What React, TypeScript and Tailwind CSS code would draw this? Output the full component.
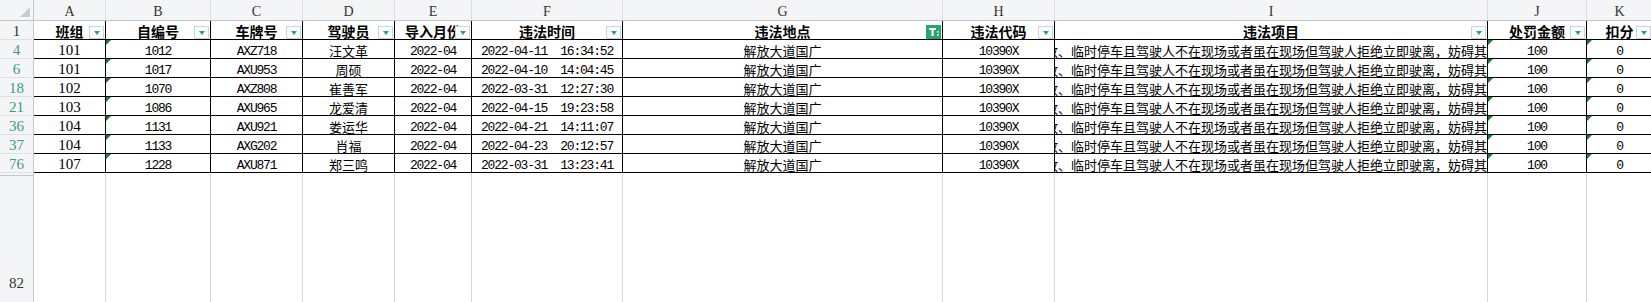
import React from 'react'

interface Col {
  letter: string
  w: string
  title: string
  cell: string
  mark?: boolean
  active?: boolean
}

const mono = "font-['Liberation_Mono',monospace] text-[13px] leading-[13px] tracking-[-1.2px] whitespace-pre"
const cjk = "font-['Noto_Sans_CJK_SC',sans-serif] text-[13px] leading-[15px] whitespace-nowrap"

const cols: Col[] = [
  { letter: 'A', w: 'w-[72px]', title: '班组', cell: "font-['Liberation_Serif',serif] text-[15px] leading-[15px]" },
  { letter: 'B', w: 'w-[105px]', title: '自编号', cell: mono, mark: true },
  { letter: 'C', w: 'w-[92px]', title: '车牌号', cell: mono },
  { letter: 'D', w: 'w-[92px]', title: '驾驶员', cell: cjk },
  { letter: 'E', w: 'w-[77px]', title: '导入月份', cell: mono },
  { letter: 'F', w: 'w-[151px]', title: '违法时间', cell: mono },
  { letter: 'G', w: 'w-[320px]', title: '违法地点', cell: cjk, active: true },
  { letter: 'H', w: 'w-[112px]', title: '违法代码', cell: mono },
  { letter: 'I', w: 'w-[433px]', title: '违法项目', cell: cjk },
  { letter: 'J', w: 'w-[99px]', title: '处罚金额', cell: mono, mark: true },
  { letter: 'K', w: 'w-[66px]', title: '扣分', cell: mono, mark: true },
]

const item = '放、临时停车且驾驶人不在现场或者虽在现场但驾驶人拒绝立即驶离，妨碍其'

const rows: { n: string; v: string[] }[] = [
  { n: '4', v: ['101', '1012', 'AXZ718', '汪文革', '2022-04', '2022-04-11  16:34:52'] },
  { n: '6', v: ['101', '1017', 'AXU953', '周硕', '2022-04', '2022-04-10  14:04:45'] },
  { n: '18', v: ['102', '1070', 'AXZ808', '崔善军', '2022-04', '2022-03-31  12:27:30'] },
  { n: '21', v: ['103', '1086', 'AXU965', '龙爱清', '2022-04', '2022-04-15  19:23:58'] },
  { n: '36', v: ['104', '1131', 'AXU921', '娄运华', '2022-04', '2022-04-21  14:11:07'] },
  { n: '37', v: ['104', '1133', 'AXG202', '肖福', '2022-04', '2022-04-23  20:12:57'] },
  { n: '76', v: ['107', '1228', 'AXU871', '郑三鸣', '2022-04', '2022-03-31  13:23:41'] },
]

const DropButton: React.FC<{ active?: boolean }> = ({ active }) =>
  active ? (
    <div className="absolute right-[1px] bottom-0 h-[14px] w-[15px] bg-[#27a66f]">
      <svg width="15" height="14" viewBox="0 0 15 14">
        <path d="M3 3h7v2H7.6v6H5.4V5H3z" fill="#fff" />
        <rect x="11" y="6" width="1.6" height="1.6" fill="#fff" />
        <rect x="11" y="9" width="1.6" height="1.6" fill="#fff" />
      </svg>
    </div>
  ) : (
    <div className="absolute right-[1px] bottom-0 flex h-[13px] w-[15px] items-center justify-center border border-[#cfd2d6] bg-white">
      <div className="h-0 w-0 border-x-[3.5px] border-t-[4px] border-x-transparent border-t-[#22a57a]" />
    </div>
  )

const RowHead: React.FC<{ n: string; teal?: boolean }> = ({ n, teal }) => (
  <div
    className={`flex w-[34px] shrink-0 items-end justify-center border-r border-b border-r-[#c3c7cc] border-b-[#dcdfe3] bg-[#f4f5f7] font-['Liberation_Serif',serif] text-[15px] leading-[15px] ${
      teal ? 'text-[#3a9c7e]' : 'text-[#333]'
    }`}
  >
    {n}
  </div>
)

export default function App() {
  return (
    <div className="flex h-[302px] w-[1651px] flex-col overflow-hidden bg-white text-black">
      {/* column letters */}
      <div className="flex h-[21px] shrink-0 border-b border-[#c3c7cc] bg-[#f4f5f7]">
        <div className="relative w-[34px] shrink-0 border-r border-[#c3c7cc]">
          <div className="absolute right-[3px] bottom-[3px] h-0 w-0 border-b-[10px] border-l-[10px] border-b-[#c9cdd2] border-l-transparent" />
        </div>
        {cols.map((c) => (
          <div
            key={c.letter}
            className={`${c.w} flex shrink-0 items-center justify-center border-r border-[#d9dce0] pt-[2px] font-['Liberation_Serif',serif] text-[14px] text-[#333]`}
          >
            {c.letter}
          </div>
        ))}
      </div>

      {/* row 1: table header */}
      <div className="flex h-[19px] shrink-0">
        <RowHead n="1" />
        {cols.map((c) => (
          <div
            key={c.letter}
            className={`${c.w} relative flex shrink-0 items-end justify-center border-r border-b border-black pb-[1px] font-['Noto_Sans_CJK_SC',sans-serif] text-[14px] leading-[14px] font-bold whitespace-nowrap`}
          >
            {c.title}
            <DropButton active={c.active} />
          </div>
        ))}
      </div>

      {/* filtered data rows */}
      {rows.map((r) => {
        const vals = [...r.v, '解放大道国广', '10390X', item, '100', '0']
        return (
          <div key={r.n} className="flex h-[19px] shrink-0">
            <RowHead n={r.n} teal />
            {cols.map((c, i) => (
              <div
                key={c.letter}
                className={`${c.w} ${c.cell} relative flex shrink-0 items-end border-r border-b border-black ${
                  c.letter === 'I' ? 'justify-end overflow-hidden' : 'justify-center'
                }`}
              >
                {c.mark && (
                  <div className="absolute top-0 left-0 h-0 w-0 border-t-[5px] border-r-[5px] border-t-[#1f7a2e] border-r-transparent" />
                )}
                {vals[i]}
              </div>
            ))}
          </div>
        )
      })}

      {/* hidden rows 77-81 */}
      <div className="flex h-[3px] shrink-0">
        <div className="w-[34px] shrink-0 border-r border-b border-r-[#c3c7cc] border-b-[#c3c7cc] bg-[#f4f5f7]" />
        {cols.map((c) => (
          <div key={c.letter} className={`${c.w} shrink-0 border-r border-[#d4d7db]`} />
        ))}
      </div>

      {/* row 82 */}
      <div className="flex flex-1">
        <div className="flex w-[34px] shrink-0 items-end justify-center border-r border-[#c3c7cc] bg-[#f4f5f7] pb-[11px] font-['Liberation_Serif',serif] text-[15px] leading-[15px] text-[#333]">
          82
        </div>
        {cols.map((c) => (
          <div key={c.letter} className={`${c.w} shrink-0 border-r border-[#d4d7db]`} />
        ))}
      </div>
    </div>
  )
}
